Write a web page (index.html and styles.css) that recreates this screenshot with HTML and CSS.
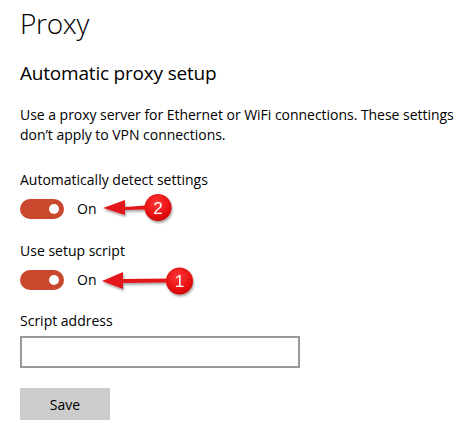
FILE: index.html
```html
<!DOCTYPE html>
<html lang="en">
<head>
<meta charset="utf-8">
<title>Proxy</title>
<link rel="stylesheet" href="styles.css">
</head>
<body>
<main class="page">
  <h1 class="title">Proxy</h1>
  <h2 class="subtitle">Automatic proxy setup</h2>
  <p class="desc">Use a proxy server for Ethernet or WiFi connections. These settings don’t apply to VPN connections.</p>

  <div class="setting">
    <div class="label">Automatically detect settings</div>
    <div class="toggle-row">
      <span class="toggle"><span class="knob"></span></span>
      <span class="state">On</span>
    </div>
  </div>

  <div class="setting">
    <div class="label">Use setup script</div>
    <div class="toggle-row">
      <span class="toggle"><span class="knob"></span></span>
      <span class="state">On</span>
    </div>
  </div>

  <div class="setting setting-address">
    <div class="label">Script address</div>
    <div class="input"></div>
  </div>

  <button class="save">Save</button>

  <svg class="annotations" width="472" height="433" viewBox="0 0 472 433" aria-hidden="true">
    <defs>
      <radialGradient id="badge" cx="0.45" cy="0.35" r="0.7">
        <stop offset="0" stop-color="#ff3a3a"/>
        <stop offset="0.7" stop-color="#e50f0f"/>
        <stop offset="1" stop-color="#c40000"/>
      </radialGradient>
      <filter id="shadow" x="-20%" y="-20%" width="140%" height="160%">
        <feDropShadow dx="1" dy="2" stdDeviation="1.2" flood-color="#000" flood-opacity="0.35"/>
      </filter>
    </defs>
    <g filter="url(#shadow)">
      <path d="M145 205.5 L125 207 L125 200 L103 208 L125 215 L125 210 L145 209.5 Z" fill="#e3191b"/>
      <circle cx="158" cy="207.5" r="13.5" fill="url(#badge)"/>
      <text x="158" y="213.5" class="badge-num">2</text>
    </g>
    <g filter="url(#shadow)">
      <path d="M168 278.5 L123 279 L123 272 L102 281 L123 289 L123 283 L168 282.5 Z" fill="#e3191b"/>
      <circle cx="179.5" cy="281" r="13.5" fill="url(#badge)"/>
      <text x="179.5" y="287" class="badge-num">1</text>
    </g>
  </svg>
</main>
</body>
</html>
```

FILE: styles.css
```css
html, body {
  margin: 0;
  padding: 0;
  background: #ffffff;
}

body {
  font-family: "Open Sans", "Noto Sans", "Liberation Sans", sans-serif;
  color: #000000;
}

.page {
  position: relative;
  width: 472px;
  height: 433px;
  box-sizing: border-box;
  padding: 4px 0 0 20px;
  overflow: hidden;
}

.title {
  margin: 0;
  font-size: 28px;
  font-weight: 300;
  line-height: 38px;
  letter-spacing: -0.3px;
}

.subtitle {
  margin: 18px 0 0 0;
  font-size: 19px;
  font-weight: 400;
  line-height: 26px;
  letter-spacing: -0.2px;
}

.desc {
  margin: 19px 0 0 0;
  width: 450px;
  font-size: 14px;
  line-height: 20px;
  letter-spacing: -0.03px;
}

.setting {
  margin-top: 25px;
}

.setting + .setting {
  margin-top: 22px;
}

.setting + .setting-address {
  margin-top: 21px;
}

.label {
  font-size: 14px;
  line-height: 20px;
}

.toggle-row {
  display: flex;
  align-items: center;
  gap: 13px;
  margin-top: 9px;
  height: 20px;
}

.toggle {
  display: flex;
  align-items: center;
  justify-content: flex-end;
  box-sizing: border-box;
  width: 44px;
  height: 20px;
  padding-right: 5px;
  border-radius: 10px;
  background: #c9472d;
}

.knob {
  width: 10px;
  height: 10px;
  border-radius: 50%;
  background: #ffffff;
}

.state {
  font-size: 14px;
  line-height: 20px;
}

.input {
  margin-top: 5px;
  box-sizing: border-box;
  width: 280px;
  height: 32px;
  border: 2px solid #999999;
  background: #ffffff;
}

.save {
  display: block;
  margin-top: 20px;
  width: 90px;
  height: 32px;
  border: none;
  background: #cccccc;
  font-family: inherit;
  font-size: 14px;
  color: #000000;
  padding: 0;
}

.annotations {
  position: absolute;
  left: 0;
  top: 0;
  pointer-events: none;
}

.badge-num {
  font-family: "Liberation Sans", "Open Sans", sans-serif;
  font-size: 17px;
  fill: #ffffff;
  text-anchor: middle;
}
```
